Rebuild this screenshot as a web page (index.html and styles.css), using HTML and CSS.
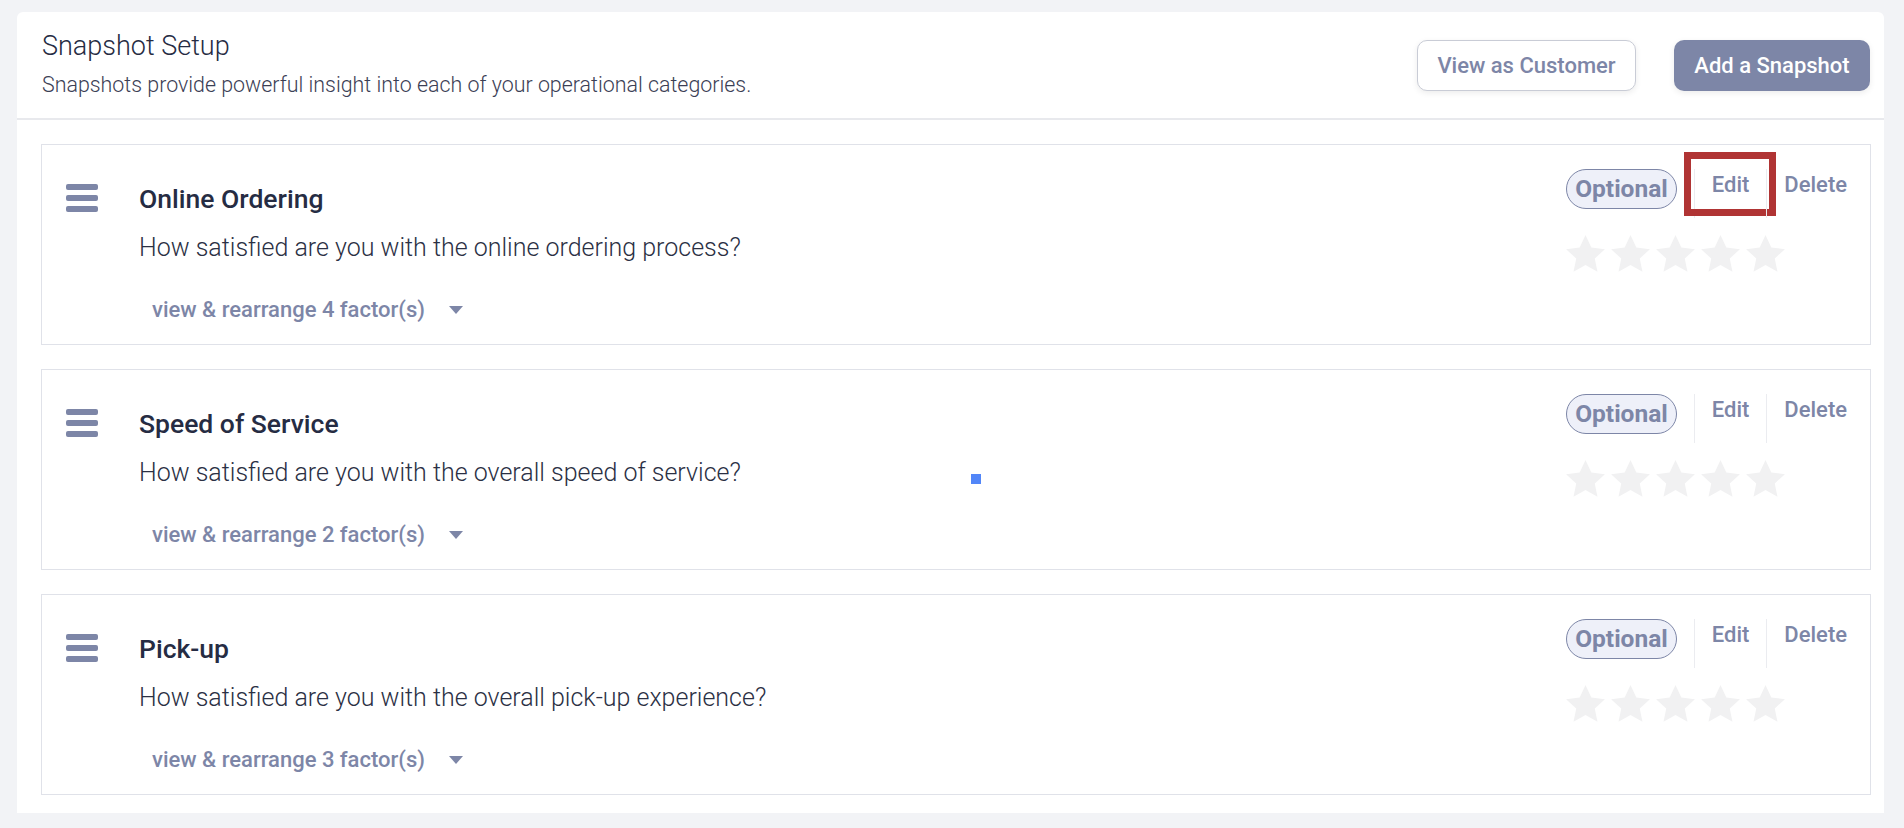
FILE: index.html
```html
<!DOCTYPE html>
<html lang="en">
<head>
  <meta charset="UTF-8">
  <meta name="viewport" content="width=device-width, initial-scale=1.0">
  <title>Snapshot Setup</title>
  <link rel="stylesheet" href="styles.css">
</head>
<body>
  <div class="panel">
    <header class="panel-head">
      <div>
        <h1>Snapshot Setup</h1>
        <p class="subtitle">Snapshots provide powerful insight into each of your operational categories.</p>
      </div>
      <div class="head-actions">
        <button class="btn btn-outline">View as Customer</button>
        <button class="btn btn-solid">Add a Snapshot</button>
      </div>
    </header>

    <ul class="snapshots">
      <li class="snapshot">
        <div class="handle"><span></span><span></span><span></span></div>
        <div class="info">
          <h2>Online Ordering</h2>
          <p class="question">How satisfied are you with the online ordering process?</p>
          <button class="factors">view &amp; rearrange 4 factor(s) <span class="caret"></span></button>
        </div>
        <div class="side">
          <div class="actions">
            <span class="pill">Optional</span>
            <a class="action marked">Edit</a>
            <a class="action">Delete</a>
          </div>
          <div class="stars">
            <svg viewBox="1.3 1.5 21.4 20.4"><path d="M12 1.5l3.2 6.9 7.5.9-5.6 5.1 1.5 7.4L12 18l-6.6 3.8 1.5-7.4L1.3 9.3l7.5-.9z"/></svg>
            <svg viewBox="1.3 1.5 21.4 20.4"><path d="M12 1.5l3.2 6.9 7.5.9-5.6 5.1 1.5 7.4L12 18l-6.6 3.8 1.5-7.4L1.3 9.3l7.5-.9z"/></svg>
            <svg viewBox="1.3 1.5 21.4 20.4"><path d="M12 1.5l3.2 6.9 7.5.9-5.6 5.1 1.5 7.4L12 18l-6.6 3.8 1.5-7.4L1.3 9.3l7.5-.9z"/></svg>
            <svg viewBox="1.3 1.5 21.4 20.4"><path d="M12 1.5l3.2 6.9 7.5.9-5.6 5.1 1.5 7.4L12 18l-6.6 3.8 1.5-7.4L1.3 9.3l7.5-.9z"/></svg>
            <svg viewBox="1.3 1.5 21.4 20.4"><path d="M12 1.5l3.2 6.9 7.5.9-5.6 5.1 1.5 7.4L12 18l-6.6 3.8 1.5-7.4L1.3 9.3l7.5-.9z"/></svg>
          </div>
        </div>
      </li>

      <li class="snapshot">
        <div class="handle"><span></span><span></span><span></span></div>
        <div class="info">
          <h2>Speed of Service</h2>
          <p class="question">How satisfied are you with the overall speed of service?</p>
          <button class="factors">view &amp; rearrange 2 factor(s) <span class="caret"></span></button>
        </div>
        <div class="side">
          <div class="actions">
            <span class="pill">Optional</span>
            <a class="action">Edit</a>
            <a class="action">Delete</a>
          </div>
          <div class="stars">
            <svg viewBox="1.3 1.5 21.4 20.4"><path d="M12 1.5l3.2 6.9 7.5.9-5.6 5.1 1.5 7.4L12 18l-6.6 3.8 1.5-7.4L1.3 9.3l7.5-.9z"/></svg>
            <svg viewBox="1.3 1.5 21.4 20.4"><path d="M12 1.5l3.2 6.9 7.5.9-5.6 5.1 1.5 7.4L12 18l-6.6 3.8 1.5-7.4L1.3 9.3l7.5-.9z"/></svg>
            <svg viewBox="1.3 1.5 21.4 20.4"><path d="M12 1.5l3.2 6.9 7.5.9-5.6 5.1 1.5 7.4L12 18l-6.6 3.8 1.5-7.4L1.3 9.3l7.5-.9z"/></svg>
            <svg viewBox="1.3 1.5 21.4 20.4"><path d="M12 1.5l3.2 6.9 7.5.9-5.6 5.1 1.5 7.4L12 18l-6.6 3.8 1.5-7.4L1.3 9.3l7.5-.9z"/></svg>
            <svg viewBox="1.3 1.5 21.4 20.4"><path d="M12 1.5l3.2 6.9 7.5.9-5.6 5.1 1.5 7.4L12 18l-6.6 3.8 1.5-7.4L1.3 9.3l7.5-.9z"/></svg>
          </div>
        </div>
        <span class="cursor-dot"></span>
      </li>

      <li class="snapshot">
        <div class="handle"><span></span><span></span><span></span></div>
        <div class="info">
          <h2>Pick-up</h2>
          <p class="question">How satisfied are you with the overall pick-up experience?</p>
          <button class="factors">view &amp; rearrange 3 factor(s) <span class="caret"></span></button>
        </div>
        <div class="side">
          <div class="actions">
            <span class="pill">Optional</span>
            <a class="action">Edit</a>
            <a class="action">Delete</a>
          </div>
          <div class="stars">
            <svg viewBox="1.3 1.5 21.4 20.4"><path d="M12 1.5l3.2 6.9 7.5.9-5.6 5.1 1.5 7.4L12 18l-6.6 3.8 1.5-7.4L1.3 9.3l7.5-.9z"/></svg>
            <svg viewBox="1.3 1.5 21.4 20.4"><path d="M12 1.5l3.2 6.9 7.5.9-5.6 5.1 1.5 7.4L12 18l-6.6 3.8 1.5-7.4L1.3 9.3l7.5-.9z"/></svg>
            <svg viewBox="1.3 1.5 21.4 20.4"><path d="M12 1.5l3.2 6.9 7.5.9-5.6 5.1 1.5 7.4L12 18l-6.6 3.8 1.5-7.4L1.3 9.3l7.5-.9z"/></svg>
            <svg viewBox="1.3 1.5 21.4 20.4"><path d="M12 1.5l3.2 6.9 7.5.9-5.6 5.1 1.5 7.4L12 18l-6.6 3.8 1.5-7.4L1.3 9.3l7.5-.9z"/></svg>
            <svg viewBox="1.3 1.5 21.4 20.4"><path d="M12 1.5l3.2 6.9 7.5.9-5.6 5.1 1.5 7.4L12 18l-6.6 3.8 1.5-7.4L1.3 9.3l7.5-.9z"/></svg>
          </div>
        </div>
      </li>
    </ul>
  </div>
</body>
</html>
```

FILE: styles.css
```css
body {
  margin: 0;
  padding: 12px 20px 0 17px;
  font-family: Roboto, "Liberation Sans", sans-serif;
  background-color: #f2f3f6;
  color: #262c43;
}

.panel {
  background-color: #fff;
  border-radius: 6px 6px 0 0;
  padding: 0 13px 0 24px;
  height: 801px;
  box-sizing: border-box;
}

.panel-head {
  display: flex;
  justify-content: space-between;
  align-items: center;
  margin: 0 -13px 0 -24px;
  padding: 18px 14px 21px 25px;
  border-bottom: 2px solid #e8e9ed;
}

.panel-head h1 {
  margin: 0;
  font-size: 27px;
  font-weight: 300;
  line-height: 32px;
}

.subtitle {
  margin: 10px 0 0;
  font-size: 21.4px;
  font-weight: 300;
  line-height: 25px;
  color: #3b4055;
}

.head-actions {
  display: flex;
  gap: 38px;
  margin-top: 3px;
}

.btn {
  height: 51px;
  padding: 0;
  border-radius: 10px;
  font-family: inherit;
  font-size: 22px;
  font-weight: 500;
  box-shadow: 0 2px 6px rgba(0, 0, 0, 0.08);
}

.btn-outline {
  width: 219px;
  background-color: #fff;
  border: 1.5px solid #c9ccd6;
  color: #7d86a7;
}

.btn-solid {
  width: 196px;
  background-color: #7d86a7;
  border: none;
  color: #fff;
}

.snapshots {
  list-style: none;
  margin: 0;
  padding: 24px 0 0;
}

.snapshot {
  position: relative;
  display: flex;
  height: 201px;
  box-sizing: border-box;
  margin-bottom: 24px;
  padding: 24px 23px 0 24px;
  border: 1.5px solid #e0e2e9;
}

.handle {
  display: flex;
  flex-direction: column;
  gap: 5px;
  width: 32px;
  margin-top: 15px;
}

.handle span {
  height: 6px;
  border-radius: 2px;
  background-color: #7d86a7;
}

.info {
  flex: 1;
  margin-left: 41px;
  padding-top: 17px;
}

.info h2 {
  margin: 0;
  font-size: 26.5px;
  font-weight: 500;
  line-height: 26px;
}

.question {
  margin: 23px 0 0;
  font-size: 25px;
  font-weight: 300;
  line-height: 26px;
  color: #2b3044;
}

.factors {
  display: flex;
  align-items: center;
  gap: 24px;
  margin-top: 37px;
  padding: 0 0 0 13px;
  border: none;
  background: none;
  font-family: inherit;
  font-size: 22px;
  font-weight: 500;
  line-height: 24px;
  color: #7d86a7;
}

.caret {
  width: 0;
  height: 0;
  border-left: 7px solid transparent;
  border-right: 7px solid transparent;
  border-top: 8px solid #7d86a7;
}

.side {
  display: flex;
  flex-direction: column;
}

.actions {
  display: flex;
  align-items: flex-start;
}

.pill {
  margin-right: 17px;
  padding: 0 8px;
  height: 40px;
  box-sizing: border-box;
  border: 1.5px solid #7d86a7;
  border-radius: 20px;
  background-color: #eef0f9;
  font-size: 24.5px;
  font-weight: 700;
  line-height: 37px;
  color: #7d86a7;
}

.action {
  position: relative;
  height: 49px;
  padding: 2.5px 17px 0;
  box-sizing: border-box;
  border-left: 1.5px solid #ebecf0;
  font-size: 22px;
  font-weight: 500;
  line-height: 26px;
  color: #7d86a7;
}

.action:last-child {
  padding-right: 0;
}

.marked::after {
  content: "";
  position: absolute;
  top: -17px;
  left: -11px;
  right: -10px;
  bottom: 2px;
  border: 7px solid #b03434;
}

.stars {
  display: flex;
  gap: 6px;
  margin-top: 16.5px;
}

.stars svg {
  width: 39px;
  height: 37px;
  fill: #f1f1f2;
}

.cursor-dot {
  position: absolute;
  left: 929px;
  top: 104px;
  width: 10px;
  height: 10px;
  background-color: #5286f8;
}
```
